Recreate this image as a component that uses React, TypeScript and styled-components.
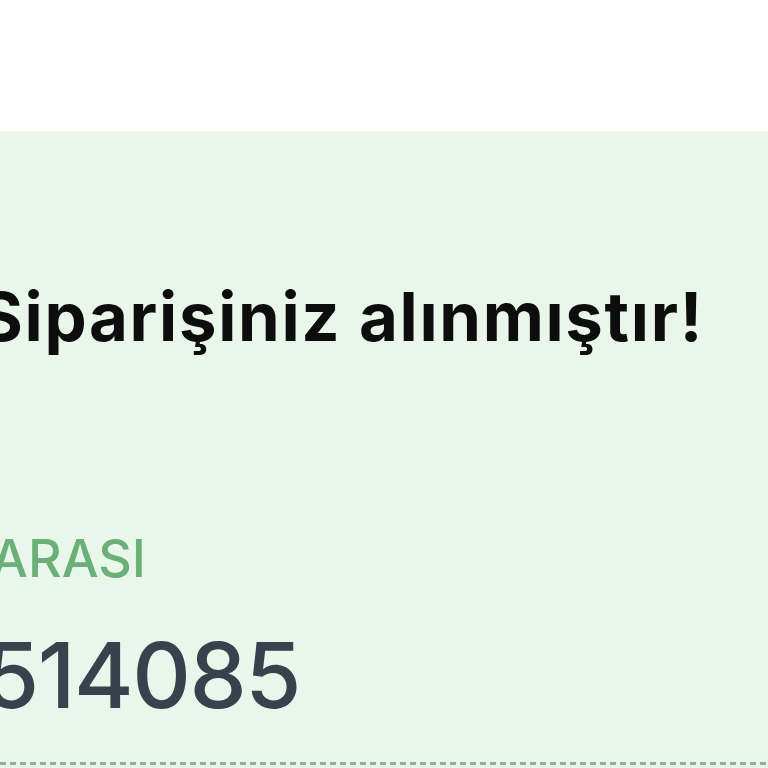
import styled, { createGlobalStyle } from 'styled-components';

const GlobalStyle = createGlobalStyle`
  html, body {
    margin: 0;
    padding: 0;
    background: #ffffff;
    overflow: hidden;
  }
  body {
    font-family: Inter, "Noto Sans", sans-serif;
  }
`;

interface ILineProps {
  $end: number;
}

const App = () => {
  return (
    <>
      <GlobalStyle />
      <Page>
        <TopBar />
        <Panel>
          <Line $end={704}>
            <Title>Siparişiniz alınmıştır!</Title>
          </Line>
          <Line $end={146}>
            <Label>SİPARİŞ NUMARASI</Label>
          </Line>
          <Line $end={300}>
            <OrderNo>55514085</OrderNo>
          </Line>
          <Divider />
        </Panel>
      </Page>
    </>
  );
};

const Page = styled.div`
  width: 768px;
  height: 768px;
  display: flex;
  flex-direction: column;
  overflow: hidden;
`;

const TopBar = styled.div`
  height: 131px;
  flex-shrink: 0;
  background: #ffffff;
`;

const Panel = styled.section`
  flex: 1;
  display: flex;
  flex-direction: column;
  background: #e9f7ea;
  padding-top: 152px;
`;

const Line = styled.div<ILineProps>`
  display: flex;
  justify-content: flex-end;
  width: ${(p) => p.$end}px;
  white-space: nowrap;
`;

const Title = styled.h1`
  margin: 0;
  font-size: 67px;
  line-height: 1;
  font-weight: 700;
  letter-spacing: 1.7px;
  color: #0d0d0d;
`;

const Label = styled.div`
  margin-top: 183px;
  font-size: 52px;
  line-height: 1;
  font-weight: 500;
  color: #6bb078;
`;

const OrderNo = styled.div`
  margin-top: 45px;
  font-size: 91px;
  line-height: 1;
  font-weight: 500;
  font-variant-numeric: proportional-nums;
  font-feature-settings: "pnum" 1, "tnum" 0;
  letter-spacing: -1.5px;
  color: #37424e;
`;

const Divider = styled.div`
  margin-top: auto;
  margin-bottom: 3px;
  height: 3px;
  background: repeating-linear-gradient(
    to right,
    #8fb09a 0 6px,
    transparent 6px 10px
  );
`;

export default App;
